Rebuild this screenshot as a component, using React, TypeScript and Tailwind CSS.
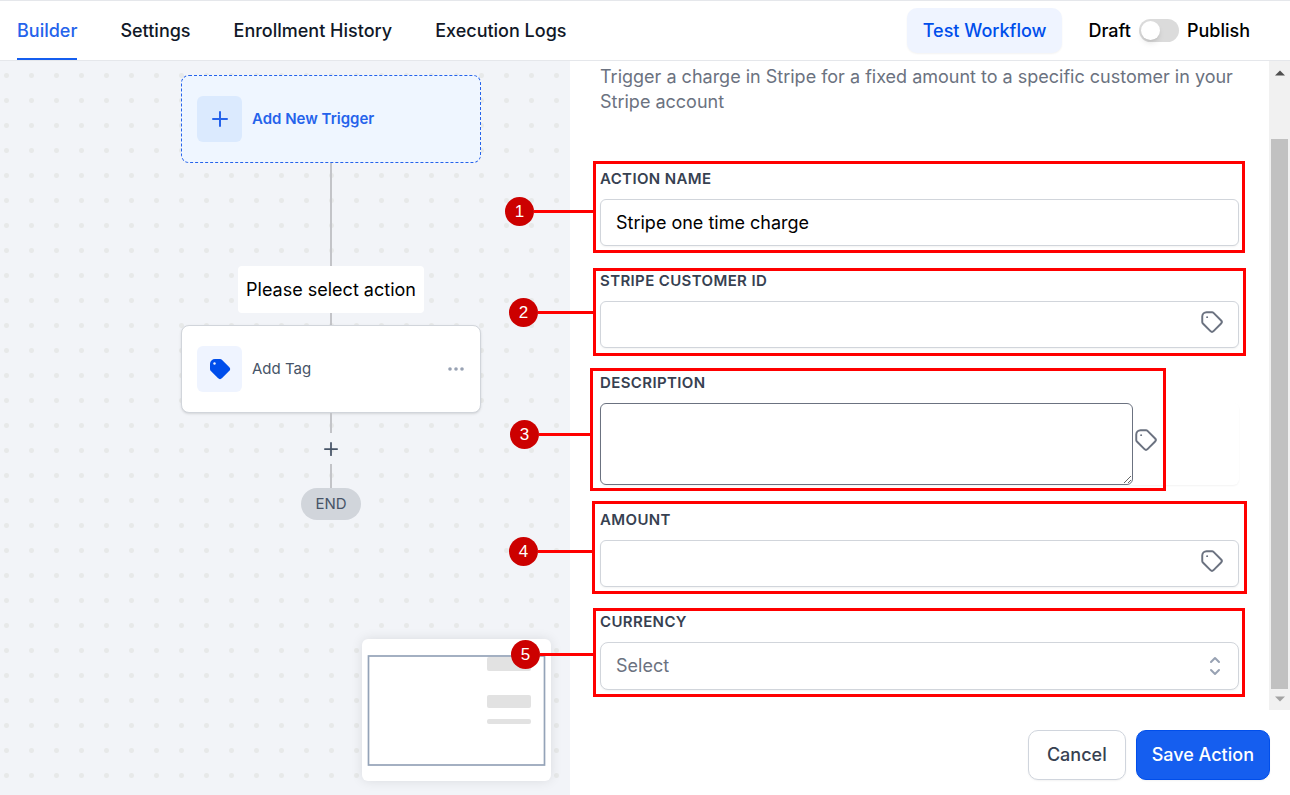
import { useState } from 'react'
import type { ReactNode } from 'react'

const tabs = ['Builder', 'Settings', 'Enrollment History', 'Execution Logs']

const TAG_PATH =
  'M7 3h5c.512 0 1.024.195 1.414.586l7 7a2 2 0 010 2.828l-7 7a2 2 0 01-2.828 0l-7-7A1.994 1.994 0 013 12V7a4 4 0 014-4z'

function TagIcon() {
  return (
    <svg className="size-[26px]" viewBox="0 0 24 24" fill="none" stroke="currentColor" strokeWidth="1.8" strokeLinecap="round" strokeLinejoin="round" aria-hidden="true">
      <path d="M7.5 7.5h.01" />
      <path d={TAG_PATH} />
    </svg>
  )
}

function SolidTagIcon() {
  return (
    <svg className="size-6" viewBox="0 0 24 24" aria-hidden="true">
      <path d={TAG_PATH} fill="#004eeb" stroke="#004eeb" strokeWidth="2" />
      <circle cx="6.5" cy="6.5" r="1.2" fill="#eff4ff" />
    </svg>
  )
}

function PlusIcon({ className }: { className: string }) {
  return (
    <svg className={className} viewBox="0 0 16 16" fill="none" stroke="currentColor" strokeWidth="2" strokeLinecap="round" aria-hidden="true">
      <path d="M8 1v14M1 8h14" />
    </svg>
  )
}

interface CalloutProps {
  step: number
  frame: string
  lead: string
}

// numbered marker with a line leading to the red frame
function Callout({ step, frame, lead }: CalloutProps) {
  return (
    <div className={`pointer-events-none absolute z-10 border-3 border-[#ff0000] ${frame}`}>
      <div className={`absolute right-full flex items-center ${lead}`}>
        <span className="flex size-[29px] shrink-0 items-center justify-center rounded-full bg-[#cc0000] font-['Liberation_Sans',sans-serif] text-[17px] text-white">
          {step}
        </span>
        <span className="h-[3px] flex-1 bg-[#ff0000]" />
      </div>
    </div>
  )
}

interface FieldProps extends CalloutProps {
  id: string
  label: string
  children: ReactNode
}

function Field({ id, label, children, ...callout }: FieldProps) {
  return (
    <div className="relative">
      <label htmlFor={id} className="mb-2 block text-[15px] leading-6 font-semibold tracking-wide text-[#374151] uppercase">
        {label}
      </label>
      {children}
      <Callout {...callout} />
    </div>
  )
}

function Header() {
  const [active, setActive] = useState('Builder')
  const [published, setPublished] = useState(false)

  return (
    <header className="flex h-[61px] items-stretch justify-between border-y border-[#e5e7eb] bg-white pr-10 pl-[17px] text-lg font-medium">
      <nav className="flex gap-[43px]">
        {tabs.map((tab) => (
          <button
            key={tab}
            type="button"
            onClick={() => setActive(tab)}
            className={
              tab === active
                ? 'border-b-2 border-[#155eef] pt-0.5 text-[#2563eb]'
                : 'border-b-2 border-transparent pt-0.5 text-[#111827]'
            }
          >
            {tab}
          </button>
        ))}
      </nav>
      <div className="flex items-center">
        <button type="button" className="mr-[26px] h-[45px] rounded-[10px] bg-[#eff4ff] px-4 text-[#004eeb] shadow-xs">
          Test Workflow
        </button>
        <label className="flex items-center gap-2 text-black">
          <span>Draft</span>
          <input
            type="checkbox"
            role="switch"
            checked={published}
            onChange={(e) => setPublished(e.target.checked)}
            className="flex h-[23px] w-10 appearance-none items-center rounded-full bg-[#dbdbdb] px-0.5 before:size-[19px] before:rounded-full before:bg-white before:shadow-md checked:justify-end checked:bg-[#155eef]"
          />
          <span>Publish</span>
        </label>
      </div>
    </header>
  )
}

function MiniMap() {
  return (
    <div className="absolute right-[19px] bottom-[14px] rounded-md bg-white shadow-[0_0_12px_rgba(0,0,0,0.1)]">
      <svg className="block" width="189" height="142" viewBox="0 0 189 142" aria-hidden="true">
        <g fill="#e2e2e2">
          <rect x="125" y="18" width="44" height="14" rx="2" />
          <rect x="125" y="56" width="44" height="13" rx="2" />
          <rect x="125" y="80" width="44" height="5" rx="2" />
        </g>
        <rect x="6.5" y="17" width="176" height="109" fill="none" stroke="#94a3b8" strokeWidth="1.7" />
      </svg>
    </div>
  )
}

function Canvas() {
  return (
    <section className="relative flex-1 bg-[#f2f4f8] bg-[radial-gradient(#e7e9e9_2px,transparent_3px)] bg-[size:25px_25px] bg-[position:-6px_2px] pt-[14px]">
      <div className="ml-[181px] flex w-[300px] flex-col items-center">
        <button type="button" className="flex h-[88px] w-full items-center gap-[10px] rounded-lg border border-dashed border-[#2563eb] bg-[#eff6ff] px-[15px] text-[15px] font-semibold text-[#2563eb]">
          <span className="flex h-[46px] w-[45px] items-center justify-center rounded-md bg-[#dbeafe]">
            <PlusIcon className="size-4" />
          </span>
          Add New Trigger
        </button>
        <div className="h-[103px] w-0.5 bg-[#c3c4c8]" />
        <div className="flex h-[47px] items-center rounded bg-white px-2 text-lg text-black">Please select action</div>
        <div className="h-3 w-0.5 bg-[#c3c4c8]" />
        <div className="flex h-[88px] w-full items-center rounded-lg border border-[#d1d5db] bg-white px-[15px] text-[15px] text-[#475467] shadow-sm">
          <span className="mr-[10px] flex h-[46px] w-[45px] items-center justify-center rounded-md bg-[#eff4ff]">
            <SolidTagIcon />
          </span>
          Add Tag
          <button type="button" aria-label="More options" className="ml-auto text-[#98a2b3]">
            <svg width="18" height="18" viewBox="0 0 18 18" fill="currentColor" aria-hidden="true">
              <circle cx="3" cy="9" r="1.8" />
              <circle cx="9" cy="9" r="1.8" />
              <circle cx="15" cy="9" r="1.8" />
            </svg>
          </button>
        </div>
        <div className="h-5 w-0.5 bg-[#c3c4c8]" />
        <button type="button" aria-label="Add action" className="flex h-[31px] w-[30px] items-center justify-center text-[#475467]">
          <PlusIcon className="size-[14px]" />
        </button>
        <div className="h-6 w-0.5 bg-[#c3c4c8]" />
        <div className="flex h-8 items-center rounded-full bg-[#d1d5db] px-[14px] text-[15px] text-[#475467]">END</div>
      </div>
      <MiniMap />
    </section>
  )
}

function ScrollTrack() {
  return (
    <div className="flex w-[21px] flex-col items-center bg-[#f1f1f1]" aria-hidden="true">
      <svg className="mt-2 h-2 w-[10px]" viewBox="0 0 10 8">
        <path d="M5 1.5l5 5H0z" fill="#505050" />
      </svg>
      <div className="mt-[62px] mb-[6px] w-[17px] flex-1 bg-[#c1c1c1]" />
      <svg className="mb-[7px] h-2 w-[10px]" viewBox="0 0 10 8">
        <path d="M5 6.5l5-5H0z" fill="#a3a3a3" />
      </svg>
    </div>
  )
}

const inputClass =
  'block h-[47px] w-full rounded-md border border-[#d1d5db] bg-white px-[15px] text-lg text-black shadow-xs outline-none'

function ActionPanel() {
  const [name, setName] = useState('Stripe one time charge')

  return (
    <section className="flex w-[720px] shrink-0 flex-col bg-white">
      <div className="flex flex-1">
        <form className="flex-1 pt-[3px] pr-[30px] pb-5 pl-[30px]">
          <p className="mb-[53px] text-lg leading-[25px] text-[#6b7280]">
            Trigger a charge in Stripe for a fixed amount to a specific customer in your Stripe account
          </p>
          <div className="flex flex-col gap-[23px]">
            <Field id="name" label="Action Name" step={1} frame="-top-1.5 -right-1.5 -bottom-[7px] -left-[7px]" lead="top-[33px] w-[91px]">
              <input id="name" type="text" value={name} onChange={(e) => setName(e.target.value)} className={inputClass} />
            </Field>
            <Field id="customer" label="Stripe Customer ID" step={2} frame="-top-px -right-[7px] -bottom-2 -left-[7px]" lead="top-[27px] w-[87px]">
              <div className="relative">
                <input id="customer" type="text" className={inputClass} />
                <button type="button" aria-label="Insert value" className="absolute top-2 right-[14px] text-[#6b7280]">
                  <TagIcon />
                </button>
              </div>
            </Field>
            <Field id="description" label="Description" step={3} frame="-top-[3px] right-[73px] -bottom-1.5 -left-[10px]" lead="top-[49px] w-[83px]">
              <div className="flex items-start rounded-md pr-20 shadow-xs">
                <textarea id="description" className="block h-[82px] flex-1 rounded-md border border-[#6b7280] bg-white px-[15px] py-2 text-lg outline-none" />
                <button type="button" aria-label="Insert value" className="mt-6 text-[#6b7280]">
                  <TagIcon />
                </button>
              </div>
            </Field>
            <Field id="amount" label="Amount" step={4} frame="-top-[7px] -right-2 -bottom-[7px] -left-2" lead="top-[33px] w-[86px]">
              <div className="relative">
                <input id="amount" type="text" className={inputClass} />
                <button type="button" aria-label="Insert value" className="absolute top-2 right-[14px] text-[#6b7280]">
                  <TagIcon />
                </button>
              </div>
            </Field>
            <Field id="currency" label="Currency" step={5} frame="-top-0.5 -right-1.5 -bottom-[7px] -left-[7px]" lead="top-[29px] w-[85px]">
              <div className="relative">
                <select id="currency" className="block h-12 w-full appearance-none rounded-lg border border-[#d1d5db] bg-white px-[15px] text-lg text-[#6b7280] shadow-xs outline-none">
                  <option>Select</option>
                </select>
                <svg className="pointer-events-none absolute top-3 right-3 size-6 text-[#98a2b3]" viewBox="0 0 24 24" fill="none" stroke="currentColor" strokeWidth="2" strokeLinecap="round" strokeLinejoin="round" aria-hidden="true">
                  <path d="M8 8l4-4 4 4M16 16l-4 4-4-4" />
                </svg>
              </div>
            </Field>
          </div>
        </form>
        <ScrollTrack />
      </div>
      <footer className="flex items-start justify-end gap-[10px] px-5 pt-5 pb-[15px] text-lg font-medium">
        <button type="button" className="h-[50px] rounded-[10px] border border-[#d0d5dd] bg-white px-[18px] text-[#374151] shadow-xs">
          Cancel
        </button>
        <button type="button" className="h-[50px] rounded-[10px] border border-[#004eeb] bg-[#155eef] px-[15px] text-white shadow-xs">
          Save Action
        </button>
      </footer>
    </section>
  )
}

export default function App() {
  return (
    <div className="flex min-h-screen flex-col bg-white font-['Inter',sans-serif]">
      <Header />
      <main className="flex flex-1">
        <Canvas />
        <ActionPanel />
      </main>
    </div>
  )
}
